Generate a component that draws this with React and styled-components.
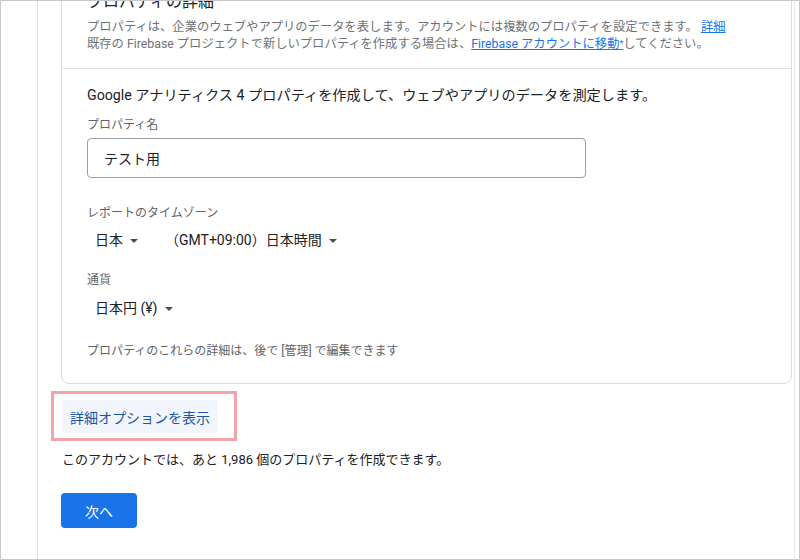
import React from "react";
import styled, { createGlobalStyle } from "styled-components";

const Global = createGlobalStyle`
  html, body { margin: 0; padding: 0; background: #fff; }
  body { font-family: Roboto, "Noto Sans CJK JP", sans-serif; }
  * { box-sizing: border-box; }
`;

const Frame = styled.div`
  width: 800px;
  height: 560px;
  border: 1px solid #c8c8c8;
  display: flex;
  overflow: hidden;
  background: #fff;
`;

const Sidebar = styled.div`
  width: 37px;
  flex: none;
  border-right: 1px solid #e4e4e4;
`;

const Main = styled.main`
  width: 757px;
  flex: none;
  border-right: 1px solid #e6e6e6;
  padding-left: 23px;
  padding-right: 2px;
  display: flex;
  flex-direction: column;
  align-items: flex-start;
`;

const Card = styled.section`
  align-self: stretch;
  margin-top: -34px;
  border: 1px solid #dadce0;
  border-radius: 8px;
`;

const Section = styled.div`
  padding: ${(p) => p.$pad};
  border-bottom: ${(p) => (p.$divider ? "1px solid #e3e4e6" : "none")};
  display: flex;
  flex-direction: column;
  align-items: flex-start;
`;

const Title = styled.h2`
  margin: 0;
  font-size: 16px;
  line-height: 20px;
  font-weight: 400;
  color: #202124;
`;

const Desc = styled.p`
  margin: 7px 0 0;
  font-size: 12.3px;
  line-height: 17px;
  color: #6f7377;
`;

const Link = styled.a`
  color: #1a73e8;
  text-decoration: underline;
`;

const Star = styled.span`
  font-size: 9px;
  vertical-align: 1px;
`;

const Lead = styled.p`
  margin: 0;
  font-size: 14.2px;
  line-height: 20px;
  color: #202124;
`;

const Label = styled.div`
  margin-top: ${(p) => p.$mt}px;
  font-size: 12px;
  line-height: 16px;
  color: #5f6368;
`;

const Input = styled.div`
  margin-top: 5px;
  width: 499px;
  height: 40px;
  border: 1px solid #9aa0a6;
  border-radius: 4px;
  padding-left: 16px;
  display: flex;
  align-items: center;
  font-size: 14px;
  color: #202124;
`;

const SelectRow = styled.div`
  margin-top: ${(p) => p.$mt}px;
  padding-left: 8px;
  display: flex;
  align-items: center;
  height: 20px;
`;

const Select = styled.span`
  display: inline-flex;
  align-items: center;
  gap: 7px;
  width: ${(p) => (p.$w ? `${p.$w}px` : "auto")};
  font-size: 14px;
  line-height: 20px;
  color: #202124;
`;

const Caret = styled.span`
  width: 0;
  height: 0;
  border-left: 4px solid transparent;
  border-right: 4px solid transparent;
  border-top: 4px solid #4a4e52;
  margin-top: 1px;
`;

const Note = styled.div`
  margin-top: 25px;
  font-size: 12px;
  line-height: 16px;
  color: #5f6368;
`;

const Highlight = styled.div`
  margin-top: 7px;
  margin-left: -10px;
  border: 3px solid #f2a4a9;
  padding: 6px 16px 5px 8px;
`;

const GhostButton = styled.button`
  border: none;
  background: #f2f6fc;
  height: 33px;
  padding: 0 8px;
  font-family: inherit;
  font-size: 14px;
  color: #1c55a8;
  border-radius: 2px;
`;

const Info = styled.p`
  margin: 9px 0 0 1px;
  font-size: 13px;
  line-height: 20px;
  color: #202124;
`;

const Primary = styled.button`
  margin-top: 23px;
  width: 76px;
  height: 35px;
  border: none;
  border-radius: 4px;
  background: #1a73e8;
  color: #fff;
  font-family: inherit;
  font-size: 14px;
`;

export default function App() {
  return (
    <>
      <Global />
      <Frame>
        <Sidebar />
        <Main>
          <Card>
            <Section $pad="24px 24px 15px 25px" $divider>
              <Title>プロパティの詳細</Title>
              <Desc>
                プロパティは、企業のウェブやアプリのデータを表します。アカウントには複数のプロパティを設定できます。{" "}
                <Link>詳細</Link>
                <br />
                既存の Firebase プロジェクトで新しいプロパティを作成する場合は、
                <Link>
                  Firebase アカウントに移動<Star>*</Star>
                </Link>
                してください。
              </Desc>
            </Section>
            <Section $pad="16px 24px 24px 25px">
              <Lead>Google アナリティクス 4 プロパティを作成して、ウェブやアプリのデータを測定します。</Lead>
              <Label $mt={12}>プロパティ名</Label>
              <Input>テスト用</Input>
              <Label $mt={27}>レポートのタイムゾーン</Label>
              <SelectRow $mt={9}>
                <Select $w={70}>
                  日本 <Caret />
                </Select>
                <Select>
                  （GMT+09:00）日本時間 <Caret />
                </Select>
              </SelectRow>
              <Label $mt={22}>通貨</Label>
              <SelectRow $mt={10}>
                <Select>
                  日本円 (¥) <Caret />
                </Select>
              </SelectRow>
              <Note>プロパティのこれらの詳細は、後で [管理] で編集できます</Note>
            </Section>
          </Card>
          <Highlight>
            <GhostButton>詳細オプションを表示</GhostButton>
          </Highlight>
          <Info>このアカウントでは、あと 1,986 個のプロパティを作成できます。</Info>
          <Primary>次へ</Primary>
        </Main>
      </Frame>
    </>
  );
}
